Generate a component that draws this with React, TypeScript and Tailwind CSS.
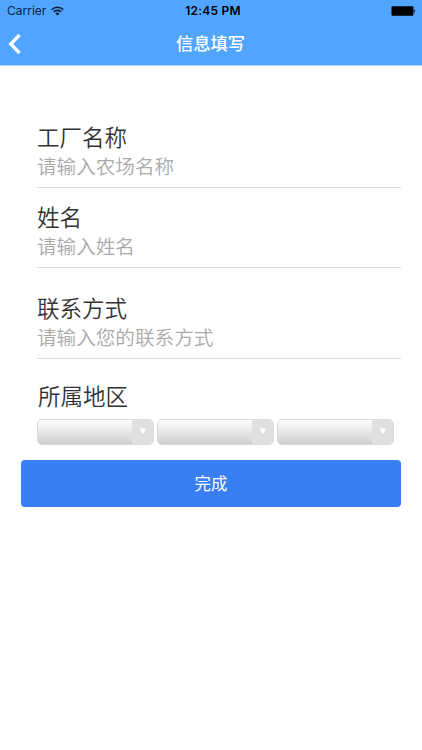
import clsx from "clsx"

const StatusBar = () => (
    <div className="relative flex h-[22px] items-center justify-between pl-[7px] pr-[6px] text-black">
        <div className="flex items-center gap-[5px]">
            <span className="text-[12px] leading-[22px] text-[#0b2340]">Carrier</span>
            <svg width="13" height="10" viewBox="0 0 13 10" fill="none" stroke="#071a30" strokeWidth="1.6">
                <path d="M0.7 3.7a8.2 8.2 0 0 1 11.6 0" />
                <path d="M2.8 5.9a5.2 5.2 0 0 1 7.4 0" />
                <path d="M6.5 9.6L4.5 7.6a2.8 2.8 0 0 1 4 0z" fill="#071a30" stroke="none" />
            </svg>
        </div>
        <span className="absolute left-[2px] w-full text-center text-[12px] font-semibold leading-[22px] tracking-[0.2px]">
            12:45 PM
        </span>
        <svg width="25" height="10" viewBox="0 0 25 10">
            <rect x="0.5" y="0.3" width="22" height="9.4" rx="1.2" fill="#000" />
            <path d="M23.3 3.3c1.2.4 1.2 3 0 3.4z" fill="#000" />
        </svg>
    </div>
)

const Header = () => (
    <header className="h-[66px] border-b border-[#a9d2ff] bg-[#52a5ff]">
        <StatusBar />
        <div className="grid h-[43px] grid-cols-[40px_1fr_41px] items-center">
            <button className="pl-[8px]" aria-label="返回">
                <svg width="14" height="22" viewBox="0 0 14 22" fill="none" stroke="#fff" strokeWidth="3.3">
                    <path d="M11.5 2L2.8 11l8.7 9" />
                </svg>
            </button>
            <h1 className="text-center text-[17.3px] font-medium leading-[24px] text-white">信息填写</h1>
        </div>
    </header>
)

interface FieldProps {
    label: string
    placeholder: string
    className?: string
}

const Field = ({ label, placeholder, className }: FieldProps) => (
    <label className={clsx("block h-[65px] border-b border-[#dcdcdc]", className)}>
        <span className="block text-[22.5px] font-[350] leading-[29px] text-[#333]">{label}</span>
        <input
            className="block h-[30px] w-full p-0 text-[19.6px] font-[350] outline-none placeholder:text-[#aaa]"
            placeholder={placeholder}
        />
    </label>
)

const RegionSelect = () => (
    <button className="flex h-[26px] w-[117px] overflow-hidden rounded-[5px] border border-[#dadada] bg-linear-to-b from-white to-[#cfcfcf]">
        <span className="flex-1" />
        <span className="flex h-full w-[21px] items-center justify-center bg-[#e0e0e0]">
            <svg width="8" height="8" viewBox="0 0 8 8">
                <path d="M0.5 1.3h7L4 8z" fill="#c4c4c4" />
                <path d="M0.5 0.5h7L4 7.2z" fill="#fff" />
            </svg>
        </span>
    </button>
)

const App = () => {
    return (
        <div className="h-[750px] w-[422px] overflow-hidden bg-white font-[Inter,'Noto_Sans_CJK_SC',sans-serif]">
            <Header />
            <main className="pt-[57px]">
                <div className="ml-[37px] w-[364px]">
                    <Field label="工厂名称" placeholder="请输入农场名称" />
                    <Field label="姓名" placeholder="请输入姓名" className="mt-[15px]" />
                    <Field label="联系方式" placeholder="请输入您的联系方式" className="mt-[26px]" />
                    <div className="mt-[23px] pl-px text-[22.5px] font-[350] leading-[29px] text-[#333]">所属地区</div>
                    <div className="mt-[8px] flex gap-[3px]">
                        <RegionSelect />
                        <RegionSelect />
                        <RegionSelect />
                    </div>
                </div>
                <button className="ml-[21px] mt-[15px] block h-[47px] w-[380px] rounded-[4px] bg-[#387ef5] pt-px text-[16.5px] text-white">
                    完成
                </button>
            </main>
        </div>
    )
}

export default App
